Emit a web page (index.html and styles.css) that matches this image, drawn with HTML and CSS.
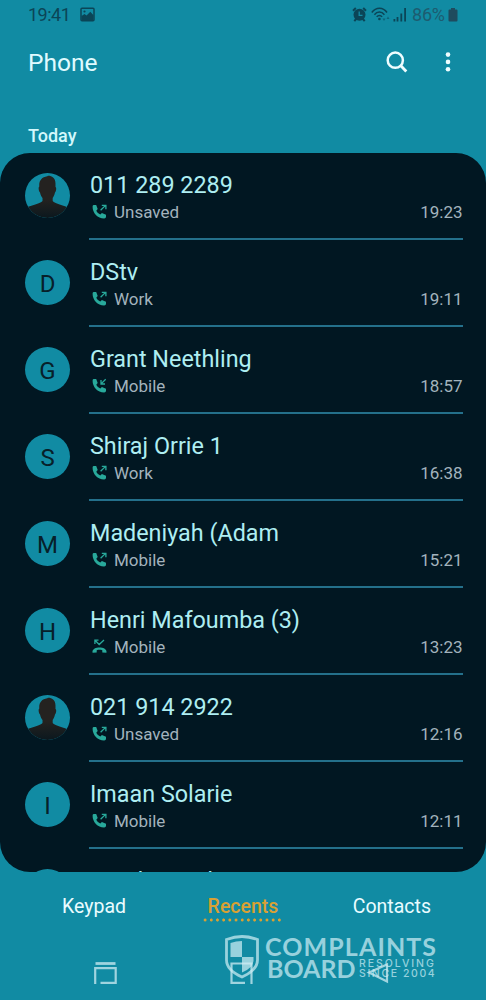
FILE: index.html
```html
<!DOCTYPE html>
<html lang="en">
<head>
<meta charset="utf-8">
<title>Phone</title>
<link rel="stylesheet" href="styles.css">
</head>
<body>
<svg width="0" height="0" class="defs" aria-hidden="true">
  <linearGradient id="shade" gradientUnits="userSpaceOnUse" x1="0" y1="26" x2="0" y2="45"><stop offset="0" stop-color="#242220"/><stop offset="1" stop-color="#0b181e"/></linearGradient>
  <symbol id="person" viewBox="0 0 45 45">
    <path d="M22.300 3.200C24 2 30.500 3.500 30.500 10.500V14C31.500 14 31.500 18 30 19.500C29.500 22 28.500 24 27.700 25V28C30 31 37 31.500 43 34.500V46H1.500V34.500C8 31.500 15 31 17.500 28V25C16.500 24 15.500 22 15 19.500C13.500 18 13.200 14 14.300 13.500C13.700 8 16.500 4 22.300 3.200Z" fill="url(#shade)"/>
  </symbol>
  <symbol id="handset" viewBox="0 0 15 15">
    <path d="M.6 2.400Q.6 1 2 1H4.200L5.700 5.100L4.300 6.700C5.100 8.300 6.600 9.700 8.300 10.500L9.900 9.100L14 10.800V13Q13.800 14.400 12.300 14.400C6 14.600 .4 9 .6 2.400Z" fill="currentColor"/>
  </symbol>
  <symbol id="outgoing" viewBox="0 0 15 15">
    <use href="#handset"/>
    <path d="M8.600 6.300L13.300 1.600M9.800 1.300H13.900V5.300" fill="none" stroke="currentColor" stroke-width="1.300"/>
  </symbol>
  <symbol id="incoming" viewBox="0 0 15 15">
    <use href="#handset"/>
    <path d="M13.700 1.200L9 5.900M9 2V6H13" fill="none" stroke="currentColor" stroke-width="1.300"/>
  </symbol>
  <symbol id="missed" viewBox="0 0 15 15">
    <path d="M.6 13.800C-1.200 6.800 16.200 6.800 14.400 13.800L10.300 13.400V11.200C8.500 10.600 6.500 10.600 4.700 11.200V13.400Z" fill="currentColor"/>
    <path d="M3.200 1.500L7.200 5.500L12 1M2.900 5V1.200H6.500" fill="none" stroke="currentColor" stroke-width="1.300"/>
  </symbol>
</svg>
<div class="phone">
  <div class="status">
    <span class="clock">19:41</span>
    <svg class="photo" width="15" height="15" viewBox="0 0 15 15"><rect x="1" y="1.200" width="13" height="12.500" rx="1" fill="none" stroke="currentColor" stroke-width="1.500"/><circle cx="4.500" cy="4.500" r="1.100" fill="currentColor"/><path d="M1.500 9L4.500 7L6.500 8.500L10.300 4.800L13.500 8.300V13.500H1.500Z" fill="currentColor"/></svg>
    <span class="grow"></span>
    <svg class="alarm" width="15" height="15" viewBox="0 0 15 15"><circle cx="7.500" cy="7.800" r="6" fill="currentColor"/><path d="M1 3.700L3.800 1.100M14 3.700L11.200 1.100M2.300 14.200L4.500 11.500M12.700 14.200L10.500 11.500" stroke="currentColor" stroke-width="2"/><path d="M7.200 4.500V8.300H10.500" fill="none" stroke="#128ba4" stroke-width="1.300"/></svg>
    <svg class="wifi" width="20" height="16" viewBox="0 0 20 16"><path d="M.8 5.500C5-.2 12-.2 16 5.500M3.400 7.700C6.200 4 10.600 4 13.400 7.700M5.700 9.900C7.200 7.900 9.600 7.900 11.100 9.900" fill="none" stroke="currentColor" stroke-width="1.500"/><circle cx="8.400" cy="12" r="1.300" fill="currentColor"/><path d="M11.500 11.500L13 14L14.500 11.500ZM15.500 12L17 9.500L18.500 12Z" fill="currentColor" opacity=".55"/></svg>
    <svg class="signal" width="14" height="15" viewBox="0 0 14 15"><path d="M.5 12H2.300V14.500H.5ZM3.600 10H5.400V14.500H3.600ZM7.400 6.500H9.200V14.500H7.400ZM11.200 1H13V14.500H11.200Z" fill="currentColor"/></svg>
    <span class="percent">86%</span>
    <svg class="battery" width="10" height="14" viewBox="0 0 10 14"><path d="M3 0H7V1.500H8.500Q9.500 1.500 9.500 2.500V12.500Q9.500 13.500 8.500 13.500H1.500Q.5 13.500 .5 12.500V2.500Q.5 1.500 1.500 1.500H3Z" fill="currentColor"/></svg>
  </div>
  <header class="header">
    <h1 class="title">Phone</h1>
    <svg class="search" width="22" height="22" viewBox="0 0 22 22"><circle cx="9.300" cy="9.200" r="7.600" fill="none" stroke="currentColor" stroke-width="2.500"/><path d="M14.600 14.500L20.300 20.400" stroke="currentColor" stroke-width="2.900"/></svg>
    <svg class="more" width="6" height="20" viewBox="0 0 6 20"><circle cx="3" cy="2.600" r="2.300" fill="currentColor"/><circle cx="3" cy="9.900" r="2.300" fill="currentColor"/><circle cx="3" cy="17.300" r="2.300" fill="currentColor"/></svg>
  </header>
  <h2 class="day">Today</h2>
  <main class="list">
    <div class="row"><div class="avatar"><svg width="45" height="45"><use href="#person"/></svg></div><div class="body"><div class="name">011 289 2289</div><div class="meta"><svg class="call" width="15" height="15"><use href="#outgoing"/></svg><span>Unsaved</span><time>19:23</time></div></div></div>
    <div class="row"><div class="avatar">D</div><div class="body"><div class="name">DStv</div><div class="meta"><svg class="call" width="15" height="15"><use href="#outgoing"/></svg><span>Work</span><time>19:11</time></div></div></div>
    <div class="row"><div class="avatar">G</div><div class="body"><div class="name">Grant Neethling</div><div class="meta"><svg class="call" width="15" height="15"><use href="#incoming"/></svg><span>Mobile</span><time>18:57</time></div></div></div>
    <div class="row"><div class="avatar">S</div><div class="body"><div class="name">Shiraj Orrie 1</div><div class="meta"><svg class="call" width="15" height="15"><use href="#outgoing"/></svg><span>Work</span><time>16:38</time></div></div></div>
    <div class="row"><div class="avatar">M</div><div class="body"><div class="name">Madeniyah (Adam</div><div class="meta"><svg class="call" width="15" height="15"><use href="#outgoing"/></svg><span>Mobile</span><time>15:21</time></div></div></div>
    <div class="row"><div class="avatar">H</div><div class="body"><div class="name">Henri Mafoumba (3)</div><div class="meta"><svg class="call" width="15" height="15"><use href="#missed"/></svg><span>Mobile</span><time>13:23</time></div></div></div>
    <div class="row"><div class="avatar"><svg width="45" height="45"><use href="#person"/></svg></div><div class="body"><div class="name">021 914 2922</div><div class="meta"><svg class="call" width="15" height="15"><use href="#outgoing"/></svg><span>Unsaved</span><time>12:16</time></div></div></div>
    <div class="row"><div class="avatar">I</div><div class="body"><div class="name">Imaan Solarie</div><div class="meta"><svg class="call" width="15" height="15"><use href="#outgoing"/></svg><span>Mobile</span><time>12:11</time></div></div></div>
    <div class="row"><div class="avatar"></div><div class="body"><div class="name">Randi Saindai</div></div></div>
  </main>
  <nav class="tabs">
    <span class="tab">Keypad</span>
    <span class="tab active">Recents</span>
    <span class="tab">Contacts</span>
  </nav>
  <footer class="softkeys">
    <svg width="486" height="30" viewBox="0 0 486 30" fill="none" stroke="#a0d4df" stroke-width="2.200">
      <path d="M95.500 3.500H115.500" stroke-width="2.800"/><path d="M95.200 24V8.200H115.700V22.800H100.500"/>
      <path d="M231.500 24V3.500H251.500V24M231.500 22.800H245"/>
      <path d="M387 4.500V21.500L369 12.500Z"/>
    </svg>
  </footer>
  <div class="watermark">
    <svg class="shield" width="34" height="44" viewBox="0 0 34 44"><path d="M17 1.500C22 1.500 27 2.500 32.500 4.500V25C32.500 33 26 38 17 42C8 38 1.500 33 1.500 25V4.500C7 2.500 12 1.500 17 1.500Z" fill="none" stroke="currentColor" stroke-width="2.800"/><path d="M17 6V22H5.500V8Q11 6 17 6ZM17 22H28.500V26Q28 33 17 37.500Z" fill="currentColor"/></svg>
    <div class="words">
      <div class="big complaints">COMPLAINTS</div>
      <div class="line"><span class="big board">BOARD</span><div class="small"><div class="s1">RESOLVING</div><div class="s2">SINCE 2004</div></div></div>
    </div>
  </div>
</div>
</body>
</html>
```
FILE: styles.css
```css
* { box-sizing: border-box; }
body { margin: 0; background: #118ba3; font-family: Roboto, sans-serif; }
.defs { position: absolute; }
.phone { position: relative; width: 486px; height: 1000px; overflow: hidden; background: #118ba3; display: flex; flex-direction: column; }
.status { height: 30px; padding: 0 27px 0 28px; display: flex; align-items: center; color: #0b4557; font-size: 18px; }
.clock { width: 52px; letter-spacing: -.5px; margin-top: -1px; }
.photo { margin-top: -2px; }
.grow { flex: 1; }
.alarm { margin-right: 4px; margin-top: -2px; }
.wifi { margin-right: 2px; margin-top: -1px; }
.signal { margin-right: 5px; margin-top: -2px; }
.percent { width: 32px; margin-right: 4px; margin-top: -1px; color: #1d5c70; letter-spacing: -.2px; }
.battery { color: #1f4b5e; margin-right: 1px; }
.header { height: 66px; padding: 0 35px 0 28px; display: flex; align-items: center; color: #e0fbff; }
.title { margin: 0; flex: 1; font-size: 24.500px; font-weight: 400; line-height: 30px; }
.search { margin: -3px 37px 0 0; color: #effdff; }
.more { color: #effdff; margin-top: -3px; }
.day { margin: 0; height: 57px; padding: 28px 28px 0; font-size: 18px; line-height: 24px; font-weight: 500; color: #d2f8fc; }
.list { height: 719px; flex: none; border-radius: 30px; background: #011722; overflow: hidden; }
.row { height: 87px; padding: 0 23px 0 25px; display: flex; gap: 20px; }
.avatar { width: 45px; height: 45px; margin-top: 20px; flex: none; border-radius: 50%; background: #118ba3; color: #07202a; overflow: hidden; font-size: 24px; line-height: 49px; text-align: center; }
.body { flex: 1; padding-top: 17px; border-bottom: 2px solid #24708b; margin-left: -1px; padding-left: 1px; }
.name { font-size: 23.350px; line-height: 30px; color: #aeeef2; white-space: nowrap; }
.meta { display: flex; align-items: center; height: 24px; color: #a3b3bd; font-size: 17px; }
.call { color: #28a99b; margin: -2px 7px 0 2px; }
.meta time { margin-left: auto; margin-right: .5px; }
.tabs { height: 68px; padding: 21px 55px 0 62px; display: flex; font-size: 19.500px; line-height: 28px; color: #eafcff; }
.tab { height: 28px; }
.tab:last-child { margin-left: auto; }
.active { margin-left: 76.500px; color: #d9a133; font-weight: 500; width: 81px; text-align: center; height: 29px; background: radial-gradient(circle, #d9a133 1.300px, transparent 1.800px) 0 100% / 6.200px 4px repeat-x; }
.softkeys { margin-top: 20px; height: 40px; }
.softkeys svg { display: block; }
.watermark { position: absolute; left: 225px; top: 935px; display: flex; gap: 6px; color: rgba(205, 237, 244, .72); font-family: Lato, sans-serif; }
.big { font-size: 25px; font-weight: 700; line-height: 22px; white-space: nowrap; }
.complaints { letter-spacing: 1.100px; }
.line { display: flex; margin-left: 2px; }
.board { width: 92px; }
.small { font: 500 10.500px/10px Inter, sans-serif; padding-top: 2px; white-space: nowrap; }
.s1 { letter-spacing: 1.950px; }
.s2 { letter-spacing: 1.600px; }
```
